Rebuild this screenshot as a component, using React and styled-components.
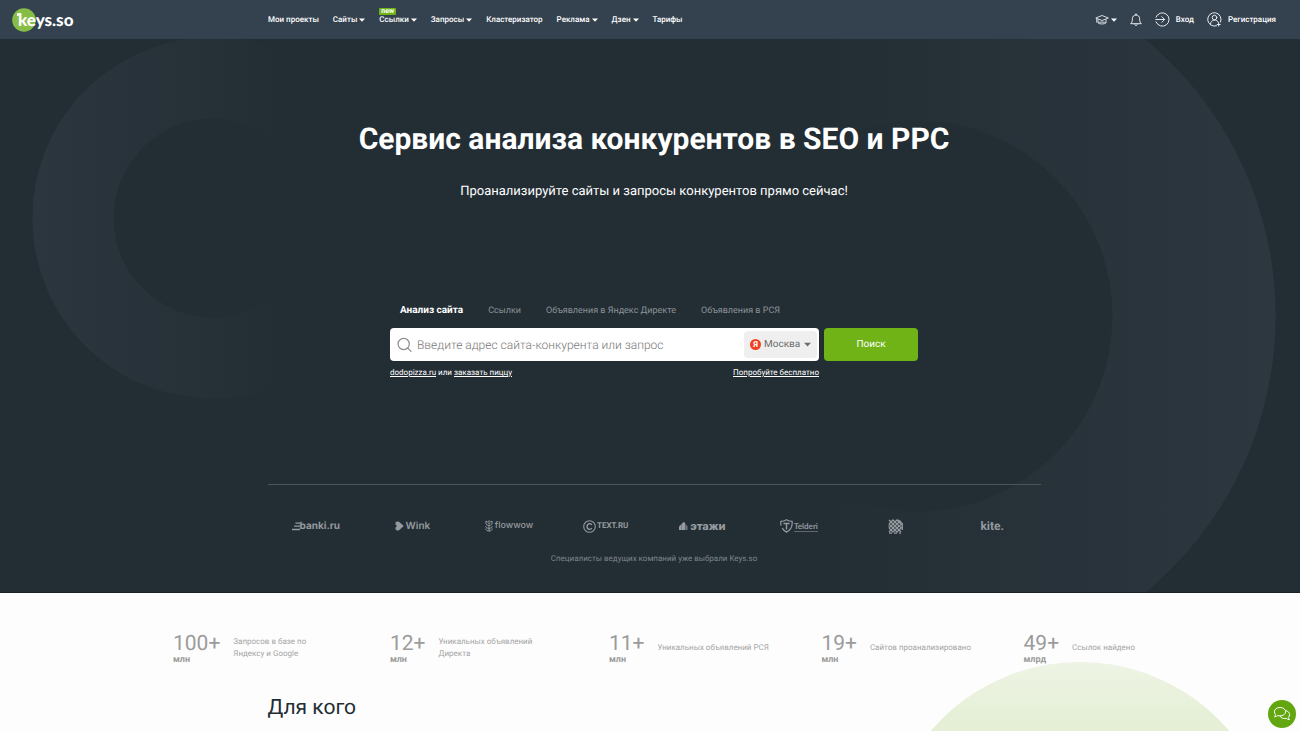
import React from 'react';
import styled, { createGlobalStyle } from 'styled-components';

const GlobalStyle = createGlobalStyle`
  * {
    box-sizing: border-box;
  }
  body {
    margin: 0;
    font-family: Roboto, "Liberation Sans", sans-serif;
    background-color: #fdfdfd;
    text-rendering: geometricPrecision;
  }
  button, input, select {
    font-family: inherit;
    text-rendering: inherit;
  }
`;

const Page = styled.div`
  display: flex;
  flex-direction: column;
  min-height: 100vh;
`;

const Header = styled.header`
  display: flex;
  align-items: center;
  height: 39px;
  padding: 0 24px 0 12px;
  background-color: #34414e;
`;

const Logo = styled.a`
  position: relative;
  flex: 0 0 256px;
  display: flex;
  align-items: center;
  height: 24px;
  text-decoration: none;
`;

const LogoMark = styled.svg`
  position: absolute;
  left: 0;
  top: 0;
`;

const LogoText = styled.span`
  position: relative;
  padding-left: 6px;
  color: #fff;
  font-family: Lato, sans-serif;
  font-size: 17px;
  font-weight: 900;
  line-height: 20px;
`;

const Nav = styled.nav`
  display: flex;
  align-items: center;
  gap: 14px;
`;

const NavLink = styled.a`
  color: #fff;
  font-size: 8px;
  font-weight: 500;
  line-height: 12px;
  text-decoration: none;
  white-space: nowrap;
`;

const NavButton = styled.button`
  position: relative;
  display: flex;
  align-items: center;
  gap: 2px;
  padding: 0;
  border: 0;
  background: none;
  color: #fff;
  font-size: 8px;
  font-weight: 500;
  line-height: 12px;
  cursor: pointer;
`;

const Badge = styled.span`
  position: absolute;
  left: 0;
  top: -6px;
  padding: 0 2px;
  border-radius: 1px;
  background-color: #6fb317;
  font-size: 7px;
  font-weight: 700;
  line-height: 7px;
`;

const UserMenu = styled.div`
  display: flex;
  align-items: center;
  gap: 13px;
  margin-left: auto;
`;

const UserLink = styled(NavLink)`
  display: flex;
  align-items: center;
  gap: 6px;
`;

const Hero = styled.section`
  position: relative;
  display: flex;
  flex-direction: column;
  align-items: center;
  padding: 81px 0 27px 8px;
  overflow: hidden;
  color: #fff;
  background-color: #232d34;
  border-bottom: 1px solid #1a2127;
`;

const Ring = styled.svg`
  position: absolute;
  top: 0;
  ${(props) => (props.$side === 'left' ? 'left: 0;' : 'right: 0;')}
`;

const Title = styled.h1`
  position: relative;
  margin: 0;
  font-size: 30px;
  font-weight: 700;
  line-height: 40px;
`;

const Subtitle = styled.p`
  position: relative;
  margin: 22px 0 0;
  font-size: 13px;
  line-height: 20px;
`;

const SearchBlock = styled.div`
  position: relative;
  width: 528px;
  max-width: 100%;
  margin-top: 99px;
`;

const Tabs = styled.div`
  display: flex;
  gap: 25px;
  padding-left: 10px;
`;

const Tab = styled.button`
  padding: 0;
  border: 0;
  background: none;
  color: ${(props) => (props.$active ? '#fff' : '#8b9297')};
  font-size: ${(props) => (props.$active ? 10 : 9)}px;
  font-weight: ${(props) => (props.$active ? 700 : 400)};
  line-height: 20px;
  cursor: pointer;
`;

const SearchForm = styled.form`
  display: flex;
  gap: 5px;
  margin-top: 7px;
`;

const Field = styled.div`
  flex: 1;
  display: flex;
  align-items: center;
  height: 33px;
  padding: 0 2px 0 7px;
  border-radius: 4px;
  background-color: #fff;
`;

const SearchInput = styled.input`
  flex: 1;
  min-width: 0;
  height: 31px;
  padding: 0 5px;
  border: 0;
  outline: none;
  background: none;
  color: #333;
  font-size: 12px;
  font-weight: 300;
  &::placeholder {
    color: #777;
    opacity: 1;
  }
`;

const Region = styled.label`
  display: flex;
  align-items: center;
  gap: 3px;
  height: 27px;
  padding: 0 6px;
  border-radius: 4px;
  background-color: #efefef;
`;

const YandexMark = styled.span`
  width: 11px;
  height: 11px;
  border-radius: 50%;
  background-color: #f0401f;
  color: #fff;
  font-size: 8px;
  font-weight: 700;
  line-height: 11px;
  text-align: center;
`;

const RegionSelect = styled.select`
  width: 37px;
  padding: 0;
  border: 0;
  outline: none;
  appearance: none;
  background: none;
  color: #6d6d6d;
  font-size: 10px;
`;

const SearchButton = styled.button`
  width: 94px;
  height: 33px;
  border: 0;
  border-radius: 4px;
  background-color: #6fb317;
  color: #fff;
  font-size: 10px;
  font-weight: 400;
  cursor: pointer;
`;

const Hints = styled.div`
  display: flex;
  justify-content: space-between;
  width: 429px;
  margin-top: 6px;
  font-size: 8px;
  line-height: 12px;
  a {
    color: #fff;
  }
`;

const Clients = styled.div`
  position: relative;
  width: 773px;
  max-width: 100%;
  margin-top: 105px;
  border-top: 1px solid #4b545b;
`;

const ClientRow = styled.div`
  display: grid;
  grid-template-columns: repeat(8, 1fr);
  align-items: center;
  height: 40px;
  margin-top: 21px;
`;

const Client = styled.div`
  display: flex;
  align-items: center;
  justify-content: center;
  gap: ${(props) => props.$gap || 0}px;
  color: #949a9e;
  font-family: ${(props) => props.$font || 'Inter'}, sans-serif;
  font-size: ${(props) => props.$size || 10}px;
  font-weight: ${(props) => props.$weight || 700};
  line-height: 16px;
`;

const Underlined = styled.span`
  border-bottom: 1px solid #60686e;
  line-height: 10px;
`;

const ClientNote = styled.p`
  margin: 7px 0 0;
  color: #7d858b;
  font-size: 8px;
  line-height: 12px;
  text-align: center;
`;

const Facts = styled.section`
  position: relative;
  flex: 1;
  padding: 39px 0 12px 8px;
  overflow: hidden;
`;

const GreenCircle = styled.div`
  position: absolute;
  top: 69px;
  right: 24px;
  width: 392px;
  height: 392px;
  border-radius: 50%;
  background: linear-gradient(#eef4e4, #dcebc9 30%);
`;

const Stats = styled.div`
  position: relative;
  display: flex;
  justify-content: space-between;
  width: 962px;
  max-width: 100%;
  margin: 0 auto;
`;

const Stat = styled.div`
  display: flex;
  align-items: center;
  gap: 13px;
  color: #9b9b9b;
`;

const StatValue = styled.div`
  font-size: 21px;
  line-height: 24px;
`;

const StatUnit = styled.div`
  font-size: 9px;
  font-weight: 700;
  line-height: 8px;
`;

const StatText = styled.div`
  min-width: ${(props) => props.$min || 0}px;
  color: #a5a5a5;
  font-size: 8px;
  line-height: 12px;
`;

const SectionTitle = styled.h2`
  position: relative;
  width: 773px;
  max-width: 100%;
  margin: 28px auto 0;
  color: #232d34;
  font-size: 21px;
  font-weight: 400;
  line-height: 32px;
`;

const ChatButton = styled.button`
  position: fixed;
  right: 4px;
  bottom: 3px;
  display: flex;
  align-items: center;
  justify-content: center;
  width: 28px;
  height: 28px;
  padding: 0;
  border: 0;
  border-radius: 50%;
  background-color: #62a70f;
  cursor: pointer;
`;

const Caret = ({ color = '#fff', size = 6 }) => (
  <svg width={size} height={size} viewBox="0 0 6 6">
    <path d="M0 1.5h6L3 4.8z" fill={color} />
  </svg>
);

const CapIcon = () => (
  <svg width="14" height="12" viewBox="0 0 14 12" fill="none" stroke="#e6eaed" strokeWidth="0.9" strokeLinejoin="round">
    <path d="M7 1.5 13.4 4 7 6.5.8 4z" />
    <path d="M3 5.2v3.6C4.5 7.8 9.500 7.800 11 8.800V5.200" />
    <path d="M3 8.800c1.500 1.600 6.500 1.600 8 0M1.700 4.600v4" />
  </svg>
);

const BellIcon = () => (
  <svg width="12" height="14" viewBox="0 0 12 14" fill="none" stroke="#e6eaed" strokeLinejoin="round" strokeLinecap="round">
    <path d="M6 .8v1.100M6 1.900c-2.300 0-3.600 1.700-3.600 3.800 0 2.700-.5 3.800-1.700 5h10.600c-1.200-1.200-1.700-2.300-1.700-5C9.600 3.600 8.300 1.900 6 1.900z" />
    <path d="M4.700 11.200c.1 2 2.500 2 2.600 0" />
  </svg>
);

const LoginIcon = () => (
  <svg width="15" height="15" viewBox="0 0 15 15" fill="none" stroke="#e6eaed" strokeLinecap="round" strokeLinejoin="round">
    <path d="M1 5.200A6.700 6.700 0 1 1 1 9.800" />
    <path d="M.8 7.500h8.700M6.800 4.700l2.800 2.800-2.800 2.800" />
  </svg>
);

const RegisterIcon = () => (
  <svg width="15" height="15" viewBox="0 0 15 15" fill="none" stroke="#e6eaed" strokeLinecap="round">
    <path d="M9.500 13.800A6.700 6.700 0 1 1 13.600 10" />
    <circle cx="7.500" cy="5.600" r="2.300" />
    <path d="M3.400 12.500c0-5.600 7-5.900 8.100-1.800M11.700 11v3M10.200 12.500h3" />
  </svg>
);

const SearchIcon = () => (
  <svg width="15" height="15" viewBox="0 0 15 15" fill="none" stroke="#8c8c8c" strokeWidth="1.200" strokeLinecap="round">
    <circle cx="6.700" cy="7" r="5.600" />
    <path d="M10.800 11.100 14 14.300" />
  </svg>
);

const ChatIcon = () => (
  <svg width="18" height="16" viewBox="0 0 18 16" fill="none" stroke="#fff" strokeLinejoin="round">
    <path d="M7 1.500c3.200 0 5.600 1.800 5.600 4.200S10.200 9.900 7 9.900c-.8 0-1.500-.1-2.200-.3C4 10.300 2.900 10.700 1.500 10.800c.6-.7 1-1.400 1.100-2.200C1.800 7.800 1.400 6.800 1.400 5.700c0-2.400 2.400-4.200 5.600-4.200z" />
    <path d="M12.800 4.700c2.300.5 3.800 2 3.800 3.900 0 1.100-.4 2-1.200 2.800.1.800.5 1.500 1.100 2.200-1.400-.1-2.500-.5-3.300-1.200-2.700.6-5.200-.3-6.200-2.400" />
  </svg>
);

const BankiIcon = () => (
  <svg width="8" height="9" viewBox="0 0 8 9" stroke="#949a9e" strokeWidth="1.300">
    <path d="M3.500 1.200H8M2 4.200h6M0 7.500h8" />
  </svg>
);

const WinkIcon = () => (
  <svg width="9" height="10" viewBox="0 0 9 10" fill="#949a9e">
    <path d="M.5 1.500Q2-.3 4 .8L8.800 5 4 9.200Q2 10.300.5 8.500V6.500L2 5 .5 3.500z" />
  </svg>
);

const FlowerIcon = () => (
  <svg width="8" height="12" viewBox="0 0 8 12" fill="none" stroke="#949a9e">
    <path d="M1 1l1.500 1L4 .7 5.500 2 7 1v2.500C7 6 1 6 1 3.500zM4 5.500V11M.7 6.200C1 8 2.500 8.300 4 8.300S7 8 7.300 6.200M.7 8.500C1 10.500 2.500 11 4 11s3-.5 3.300-2.500" />
    <circle cx="4" cy="3.300" r=".6" />
  </svg>
);

const CopyrightIcon = () => (
  <svg width="13" height="13" viewBox="0 0 13 13" fill="none" stroke="#949a9e">
    <circle cx="6.500" cy="6.500" r="5.800" strokeWidth="1.100" />
    <path d="M8.800 4.800C7.600 3 4 3.200 4 6.500s3.600 3.500 4.800 1.700" strokeWidth="1.400" />
  </svg>
);

const HouseIcon = () => (
  <svg width="9" height="8" viewBox="0 0 9 8" fill="#949a9e">
    <path d="M0 8V4.500L2.600 2v6zM2.800 8V1.600L5 0l1.200 1v7z" />
    <path d="M6.300 8V2L8.600 4v4z" opacity=".6" />
  </svg>
);

const ShieldIcon = () => (
  <svg width="13" height="14" viewBox="0 0 13 14" fill="none" stroke="#949a9e" strokeWidth="1.200">
    <path d="M1.200 6.500C.7 5.300.7 3.600.9 2.400 3 2.400 4.800 1.900 6.500.800c1.700 1.100 3.500 1.600 5.600 1.600.5 4.800-1.300 8.400-5.600 10.700-2-1.100-3.400-2.500-4.300-4" />
    <path d="M3.500 4.500h6M6.500 4.500v6" strokeWidth="1.400" />
  </svg>
);

const MosaicIcon = () => (
  <svg width="15" height="15" viewBox="0 0 15 15" fill="none" stroke="#949a9e" strokeWidth="1.300">
    <path d="M1 1l2 2 2-2 2 2 2-2 2 2M1 5l2-2 2 2 2-2 2 2 2-2 2 2M1 5l2 2 2-2 2 2 2-2 2 2 3-2M1 9l2-2 2 2 2-2 2 2 2-2 3 2M1 9l2 2 2-2 2 2 2-2 2 2 2-2M1 13l2-2 2 2 2-2 2 2 2-2 2 2" />
    <path d="M1 14.200h3M6 14.200h3M11 14.200h2M.7 6.500v1M14.300 4v7" />
    <path d="M9 .5q4.500 0 5.300 4.500L11 3z" fill="#949a9e" stroke="none" />
  </svg>
);

const menu = [
  { label: 'Мои проекты' },
  { label: 'Сайты', drop: true },
  { label: 'Ссылки', drop: true, badge: 'new' },
  { label: 'Запросы', drop: true },
  { label: 'Кластеризатор' },
  { label: 'Реклама', drop: true },
  { label: 'Дзен', drop: true },
  { label: 'Тарифы' },
];

const tabs = ['Анализ сайта', 'Ссылки', 'Объявления в Яндекс Директе', 'Объявления в РСЯ'];

const stats = [
  { value: '100+', unit: 'млн', text: <>Запросов в базе по<br />Яндексу и Google</>, min: 104 },
  { value: '12+', unit: 'млн', text: <>Уникальных объявлений<br />Директа</>, min: 118 },
  { value: '11+', unit: 'млн', text: 'Уникальных объявлений РСЯ' },
  { value: '19+', unit: 'млн', text: 'Сайтов проанализировано' },
  { value: '49+', unit: 'млрд', text: 'Ссылок найдено' },
];

const App = () => {
  return (
    <Page>
      <GlobalStyle />
      <Header>
        <Logo href="#">
          <LogoMark width="24" height="24" viewBox="0 0 24 24">
            <circle cx="12" cy="12" r="11.800" fill="#87bd45" />
            <path d="M5 5.200h4v2H7.500L5 8.200z" fill="#fff" />
          </LogoMark>
          <LogoText>keys.so</LogoText>
        </Logo>
        <Nav>
          {menu.map((item) =>
            item.drop ? (
              <NavButton key={item.label} type="button">
                {item.label}
                <Caret />
                {item.badge && <Badge>{item.badge}</Badge>}
              </NavButton>
            ) : (
              <NavLink key={item.label} href="#">{item.label}</NavLink>
            )
          )}
        </Nav>
        <UserMenu>
          <NavButton type="button" aria-label="Обучение">
            <CapIcon />
            <Caret />
          </NavButton>
          <NavButton type="button" aria-label="Уведомления">
            <BellIcon />
          </NavButton>
          <UserLink href="#"><LoginIcon />Вход</UserLink>
          <UserLink href="#"><RegisterIcon />Регистрация</UserLink>
        </UserMenu>
      </Header>

      <Hero>
        {/* Background rings */}
        <Ring $side="left" width="300" height="400" viewBox="0 0 300 400">
          <defs>
            <linearGradient id="ringLeft" gradientUnits="userSpaceOnUse" x1="32" y1="0" x2="290" y2="0">
              <stop offset="0" stopColor="#2c363e" />
              <stop offset="1" stopColor="#2c363e" stopOpacity="0" />
            </linearGradient>
          </defs>
          <circle cx="213" cy="179" r="140" fill="none" stroke="url(#ringLeft)" strokeWidth="81" />
        </Ring>
        <Ring $side="right" width="500" height="554" viewBox="0 0 500 554">
          <defs>
            <linearGradient id="ringRight" gradientUnits="userSpaceOnUse" x1="476" y1="0" x2="20" y2="0">
              <stop offset="0" stopColor="#2d373f" />
              <stop offset="1" stopColor="#2d373f" stopOpacity="0" />
            </linearGradient>
          </defs>
          <circle cx="117" cy="277" r="277" fill="none" stroke="url(#ringRight)" strokeWidth="163" />
        </Ring>

        <Title>Сервис анализа конкурентов в SEO и PPC</Title>
        <Subtitle>Проанализируйте сайты и запросы конкурентов прямо сейчас!</Subtitle>

        <SearchBlock>
          <Tabs>
            {tabs.map((tab, i) => (
              <Tab key={tab} type="button" $active={i === 0}>{tab}</Tab>
            ))}
          </Tabs>
          <SearchForm>
            <Field>
              <SearchIcon />
              <SearchInput type="text" aria-label="Поиск" placeholder="Введите адрес сайта-конкурента или запрос" />
              <Region>
                <YandexMark>Я</YandexMark>
                <RegionSelect aria-label="Регион">
                  <option>Москва</option>
                </RegionSelect>
                <Caret color="#6d6d6d" size={7} />
              </Region>
            </Field>
            <SearchButton type="button">Поиск</SearchButton>
          </SearchForm>
          <Hints>
            <span><a href="#">dodopizza.ru</a> или <a href="#">заказать пиццу</a></span>
            <a href="#">Попробуйте бесплатно</a>
          </Hints>
        </SearchBlock>

        <Clients>
          <ClientRow>
            <Client $size={10}><BankiIcon />banki.ru</Client>
            <Client $gap={2} $weight={600}><WinkIcon />Wink</Client>
            <Client $gap={2} $size={9} $weight={500}><FlowerIcon />flowwow</Client>
            <Client $gap={1} $font="Roboto" $size={8}><CopyrightIcon />TEXT.RU</Client>
            <Client $gap={2} $size={11} $weight={800}><HouseIcon />этажи</Client>
            <Client $gap={1} $font="Lato" $size={8}><ShieldIcon /><Underlined>Telderi</Underlined></Client>
            <Client><MosaicIcon /></Client>
            <Client $font="Roboto" $size={12}>kite.</Client>
          </ClientRow>
          <ClientNote>Специалисты ведущих компаний уже выбрали Keys.so</ClientNote>
        </Clients>
      </Hero>

      <Facts>
        <GreenCircle />
        <Stats>
          {stats.map((stat) => (
            <Stat key={stat.value}>
              <div>
                <StatValue>{stat.value}</StatValue>
                <StatUnit>{stat.unit}</StatUnit>
              </div>
              <StatText $min={stat.min}>{stat.text}</StatText>
            </Stat>
          ))}
        </Stats>
        <SectionTitle>Для кого</SectionTitle>
      </Facts>

      <ChatButton type="button" aria-label="Чат">
        <ChatIcon />
      </ChatButton>
    </Page>
  );
};

export default App;
